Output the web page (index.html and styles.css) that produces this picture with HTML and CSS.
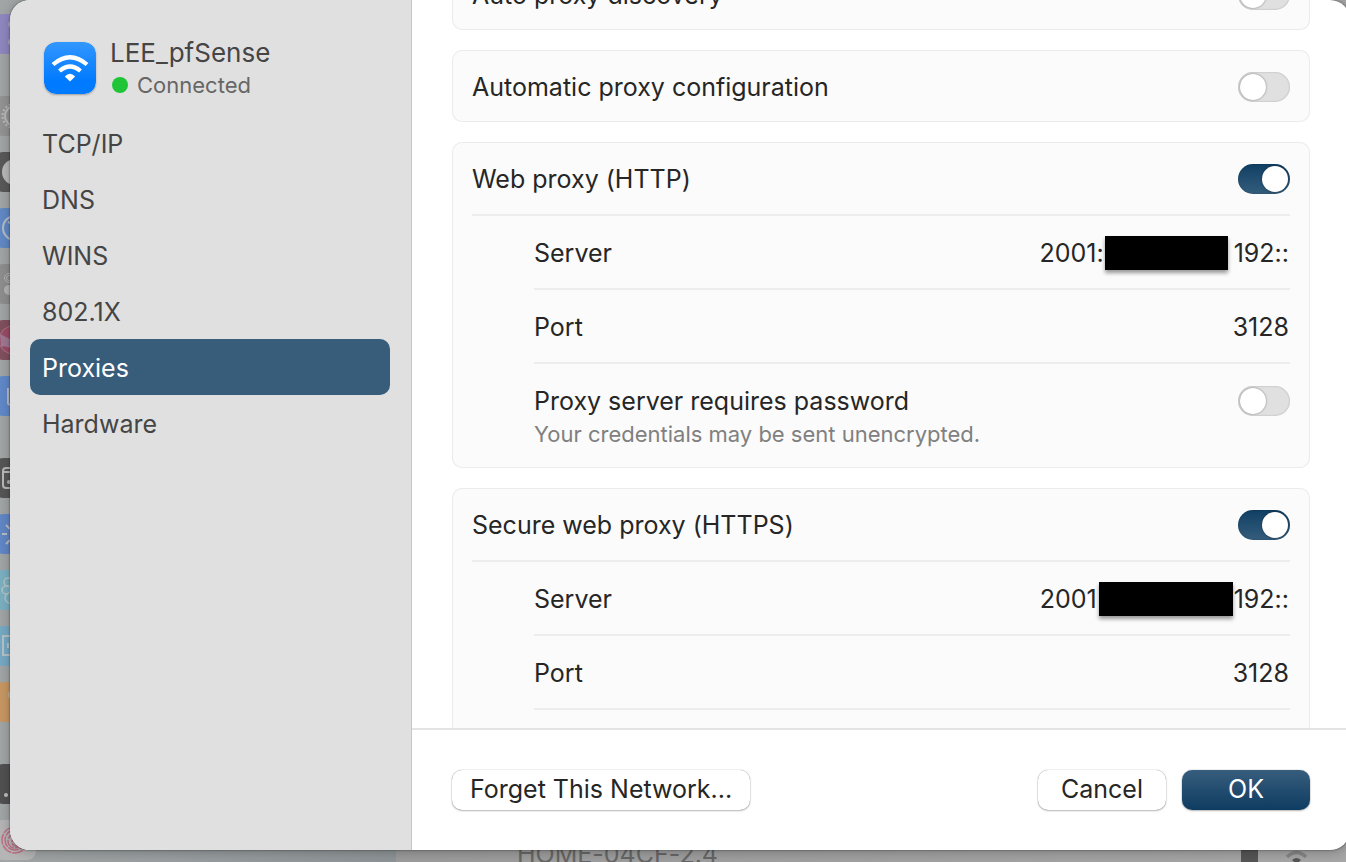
FILE: index.html
```html
<!DOCTYPE html>
<html lang="en">
<head>
<meta charset="utf-8">
<title>Network Details</title>
<link rel="stylesheet" href="styles.css">
</head>
<body>
<div class="backdrop">
  <svg class="backdrop-icons" width="60" height="862" viewBox="0 0 60 862" aria-hidden="true">
    <g>
      <rect x="-6" y="14" width="42" height="40" rx="9" fill="#8f87c0"/>
      <path d="M12 20c-4 0-5 7-1 8M12 38c-5 0-5 8 0 8" fill="#b9b9bd"/>
      <rect x="-6" y="96" width="42" height="40" rx="9" fill="#939393"/>
      <circle cx="15" cy="116" r="10" fill="none" stroke="#b9b9b9" stroke-width="2"/>
      <circle cx="15" cy="116" r="12.500" fill="none" stroke="#b9b9b9" stroke-width="2" stroke-dasharray="2 2"/>
      <rect x="-6" y="152" width="42" height="40" rx="9" fill="#595959"/>
      <circle cx="15" cy="172" r="13" fill="#b9b9b9"/>
      <rect x="-6" y="208" width="42" height="40" rx="9" fill="#6189c4"/>
      <circle cx="15" cy="228" r="12" fill="none" stroke="#b5bcc5" stroke-width="2"/>
      <path d="M8 222l5 2" stroke="#b5bcc5" stroke-width="2"/>
      <rect x="-6" y="264" width="42" height="40" rx="9" fill="#8e8e8e"/>
      <circle cx="9" cy="278" r="4.500" fill="none" stroke="#b5b5b5"/>
      <circle cx="9" cy="278" r="2.500" fill="none" stroke="#b5b5b5"/>
      <circle cx="9" cy="290" r="5" fill="#b5b5b5"/>
      <rect x="-6" y="320" width="42" height="40" rx="9" fill="#82505f"/>
      <circle cx="13" cy="340" r="14" fill="#9b4c66" stroke="#a67788"/>
      <path d="M0 334q6 3 10 5v9Q4 345 1 347Z" fill="#9e7892"/>
      <rect x="-6" y="376" width="42" height="40" rx="9" fill="#6189c8"/>
      <path d="M8 388v15q0 2 4 2" fill="none" stroke="#b5bdc8" stroke-width="2"/>
      <rect x="-6" y="458" width="42" height="40" rx="9" fill="#565656"/>
      <path d="M12 468H6q-3 0-3 3v14q0 3 3 3h6M3 472h9" fill="none" stroke="#b8b8b8" stroke-width="2"/>
      <circle cx="9" cy="482" r="2" fill="#b8b8b8"/>
      <rect x="-6" y="514" width="42" height="40" rx="9" fill="#6287c6"/>
      <path d="M2 534h5M6 525l4 4M6 544l4-4" stroke="#b8bcc5" stroke-width="2"/>
      <rect x="-6" y="570" width="42" height="40" rx="9" fill="#7ab0c1"/>
      <g fill="none" stroke="#b5c2c7" stroke-width="1.500"><circle cx="8" cy="582" r="4"/><circle cx="6" cy="590" r="4"/><circle cx="10" cy="598" r="5"/></g>
      <rect x="-6" y="626" width="42" height="40" rx="9" fill="#76a9c4"/>
      <path d="M12 636H3v19h9M8 643v5" fill="none" stroke="#b7c2c8" stroke-width="2"/>
      <rect x="-6" y="682" width="42" height="40" rx="9" fill="#c79763"/>
      <circle cx="13" cy="695" r="5" fill="#bfb8ae"/>
      <rect x="-6" y="764" width="42" height="40" rx="9" fill="#515151"/>
      <circle cx="6" cy="795" r="2" fill="#c0c0c0"/>
      <rect x="-6" y="820" width="42" height="40" rx="9" fill="#b5b5b5"/>
      <g fill="none" stroke="#bd6f83" stroke-width="1.500" stroke-dasharray="11 1"><circle cx="15" cy="840" r="13"/><circle cx="15" cy="840" r="10"/><circle cx="15" cy="841" r="7"/><circle cx="16" cy="842" r="4"/></g>
    </g>
  </svg>
  <div class="backdrop-row">
    <span>HOME-04CF-2.4</span>
    <svg class="backdrop-status" width="70" height="16" viewBox="0 0 70 16" aria-hidden="true">
      <path d="M0 0h17v16H0z" fill="#555"/>
      <path d="M46 7q9.500-9 19 0" fill="none" stroke="#858585" stroke-width="3.500"/>
      <path d="M51 10q4.500-4 9 0l-4.500 4z" fill="#555"/>
    </svg>
  </div>
</div>

<main class="dialog">
  <aside class="sidebar">
    <header class="network">
      <svg class="wifi" viewBox="0 0 52 52" aria-hidden="true">
        <defs><linearGradient id="wifi-blue" x1="0" y1="0" x2="0" y2="1"><stop offset="0" stop-color="#3397ff"/><stop offset="0.750" stop-color="#007aff"/></linearGradient></defs>
        <rect width="52" height="52" rx="12" fill="url(#wifi-blue)"/>
        <path d="M9 22.500Q26 8 43 22.500M15.500 29Q26 20 36.500 29" fill="none" stroke="#fff" stroke-width="4.200"/>
        <path d="M20.800 34.500Q26 28.800 31.200 34.500L26 39.500Z" fill="#fff"/>
      </svg>
      <div>
        <h1 class="network-name">LEE_pfSense</h1>
        <p class="network-status"><span class="dot"></span>Connected</p>
      </div>
    </header>
    <nav class="nav">
      <a class="nav-item" href="#tcpip">TCP/IP</a>
      <a class="nav-item" href="#dns">DNS</a>
      <a class="nav-item" href="#wins">WINS</a>
      <a class="nav-item" href="#8021x">802.1X</a>
      <a class="nav-item selected" href="#proxies" aria-current="page">Proxies</a>
      <a class="nav-item" href="#hardware">Hardware</a>
    </nav>
  </aside>

  <section class="content">
    <div class="scroller">
      <div class="cards">
        <div class="card">
          <div class="row"><label for="auto-discovery">Auto proxy discovery</label><input class="switch" type="checkbox" id="auto-discovery"></div>
        </div>
        <div class="card">
          <div class="row"><label for="auto-config">Automatic proxy configuration</label><input class="switch" type="checkbox" id="auto-config"></div>
        </div>
        <div class="card">
          <div class="row"><label for="http">Web proxy (HTTP)</label><input class="switch" type="checkbox" id="http" checked></div>
          <div class="fields">
            <div class="row"><span>Server</span><span class="value">2001:<span class="redacted"></span>192::</span></div>
            <div class="row"><label for="http-port">Port</label><input class="port" type="text" id="http-port" value="3128"></div>
            <div class="row tall">
              <div><label for="http-password">Proxy server requires password</label><p class="hint">Your credentials may be sent unencrypted.</p></div>
              <input class="switch" type="checkbox" id="http-password">
            </div>
          </div>
        </div>
        <div class="card">
          <div class="row"><label for="https">Secure web proxy (HTTPS)</label><input class="switch" type="checkbox" id="https" checked></div>
          <div class="fields">
            <div class="row"><span>Server</span><span class="value">2001<span class="redacted wide"></span>192::</span></div>
            <div class="row"><label for="https-port">Port</label><input class="port" type="text" id="https-port" value="3128"></div>
            <div class="row"></div>
          </div>
        </div>
      </div>
    </div>
    <footer class="actions">
      <button class="button forget" type="button">Forget This Network...</button>
      <button class="button" type="button">Cancel</button>
      <button class="button primary" type="button">OK</button>
    </footer>
  </section>
</main>
</body>
</html>
```
FILE: styles.css
```css
* { box-sizing: border-box; }

body {
  margin: 0;
  height: 100vh;
  padding: 0 0 12px 10px;
  overflow: hidden;
  position: relative;
  background: #999;
  color: #262626;
  font: 25px/32px Inter, "Liberation Sans", sans-serif;
  font-variant-ligatures: no-contextual;
}

h1, p { margin: 0; font-weight: 400; }

/* Window behind the sheet */
.backdrop {
  position: absolute;
  inset: 0;
  overflow: hidden;
  background: linear-gradient(90deg, #a1a5a6 0, #8d9396 396px, #9b9b9b 396px, #a6a6a6 100%);
}

.backdrop-icons { position: absolute; left: 0; top: 0; }

.backdrop-row {
  position: absolute;
  left: 517px;
  right: 35px;
  bottom: -8px;
  display: flex;
  justify-content: space-between;
  color: #666;
}

.backdrop-status { margin-top: 12px; }

/* Sheet */
.dialog {
  position: relative;
  display: flex;
  height: 100%;
  margin-right: -4px;
  border-radius: 20px;
  overflow: hidden;
  background: #fff;
  box-shadow: 0 0 2px rgba(0, 0, 0, .6), 0 2px 12px rgba(0, 0, 0, .25);
}

.sidebar {
  flex: 0 0 402px;
  padding: 36px 21px 20px 20px;
  border-right: 1px solid #c6c6c6;
  background: #e0e0e0;
  color: #454545;
}

.network {
  display: flex;
  gap: 14px;
  padding-left: 14px;
  margin-bottom: 15px;
}

.wifi {
  width: 52px;
  height: 52px;
  margin-top: 6px;
  border-radius: 12px;
  box-shadow: 0 1px 2px rgba(0, 0, 0, .3);
}

.network-name { font-size: 26px; line-height: 34px; }

.network-status {
  display: flex;
  align-items: center;
  gap: 9px;
  font-size: 22px;
  line-height: 30px;
  color: #666;
}

.dot {
  width: 16px;
  height: 16px;
  margin-left: 2px;
  border-radius: 50%;
  background: #1fc437;
}

.nav { display: flex; flex-direction: column; }

.nav-item {
  padding: 13px 12px 11px;
  border-radius: 10px;
  color: inherit;
  text-decoration: none;
}

.selected { background: #375d7b; color: #fff; }

.content {
  flex: 1;
  min-width: 0;
  display: flex;
  flex-direction: column;
}

.scroller { flex: 1; min-height: 0; overflow: hidden; }

.cards {
  display: flex;
  flex-direction: column;
  gap: 20px;
  margin-top: -42px;
  padding: 0 40px 20px;
}

.card {
  padding: 0 20px;
  border-radius: 10px;
  background: #fbfbfb;
  box-shadow: inset 0 0 0 1px #ebebeb;
}

.row {
  display: flex;
  align-items: center;
  justify-content: space-between;
  min-height: 72px;
  padding-top: 2px;
}

.fields { border-top: 2px solid #ededed; padding-left: 62px; }
.fields .row + .row { border-top: 2px solid #ededed; min-height: 74px; }
.fields .tall { align-items: flex-start; padding: 21px 0 16px; }
.tall .switch { margin-top: 1px; }

.hint { font-size: 22px; line-height: 35px; color: #808080; }

.switch {
  appearance: none;
  flex: none;
  display: flex;
  width: 52px;
  height: 30px;
  margin: 0;
  padding: 2px;
  border-radius: 15px;
  background: #e0e0e0;
  box-shadow: inset 0 0 2px rgba(0, 0, 0, .25);
}

.switch::before {
  content: "";
  width: 26px;
  height: 26px;
  border-radius: 50%;
  background: #fff;
  box-shadow: 0 0 2px rgba(0, 0, 0, .5);
}

.switch:checked {
  justify-content: flex-end;
  background: linear-gradient(#103f64, #355d7c);
}

.value { display: flex; align-items: center; padding-right: 1px; }

.redacted {
  width: 123px;
  height: 34px;
  margin: 0 6px 0 1px;
  background: #000;
  box-shadow: 0 3px 4px rgba(0, 0, 0, .4);
}

.redacted.wide { width: 134px; margin: 0 1px 0 2px; }

.port {
  width: 160px;
  padding: 0 1px;
  border: 0;
  background: none;
  color: inherit;
  font: inherit;
  text-align: right;
}

.actions {
  display: flex;
  gap: 16px;
  padding: 40px;
  border-top: 2px solid #e3e3e3;
}

.button {
  min-width: 128px;
  height: 40px;
  padding: 0 18px 2px;
  border: 0;
  border-radius: 10px;
  background: #fff;
  color: inherit;
  font: inherit;
  box-shadow: 0 0 1px rgba(0, 0, 0, .5), 0 1px 2px rgba(0, 0, 0, .25);
}

.forget { margin-right: auto; }

.primary {
  background: linear-gradient(#375d7d, #0e3c61);
  color: #fff;
}
```
